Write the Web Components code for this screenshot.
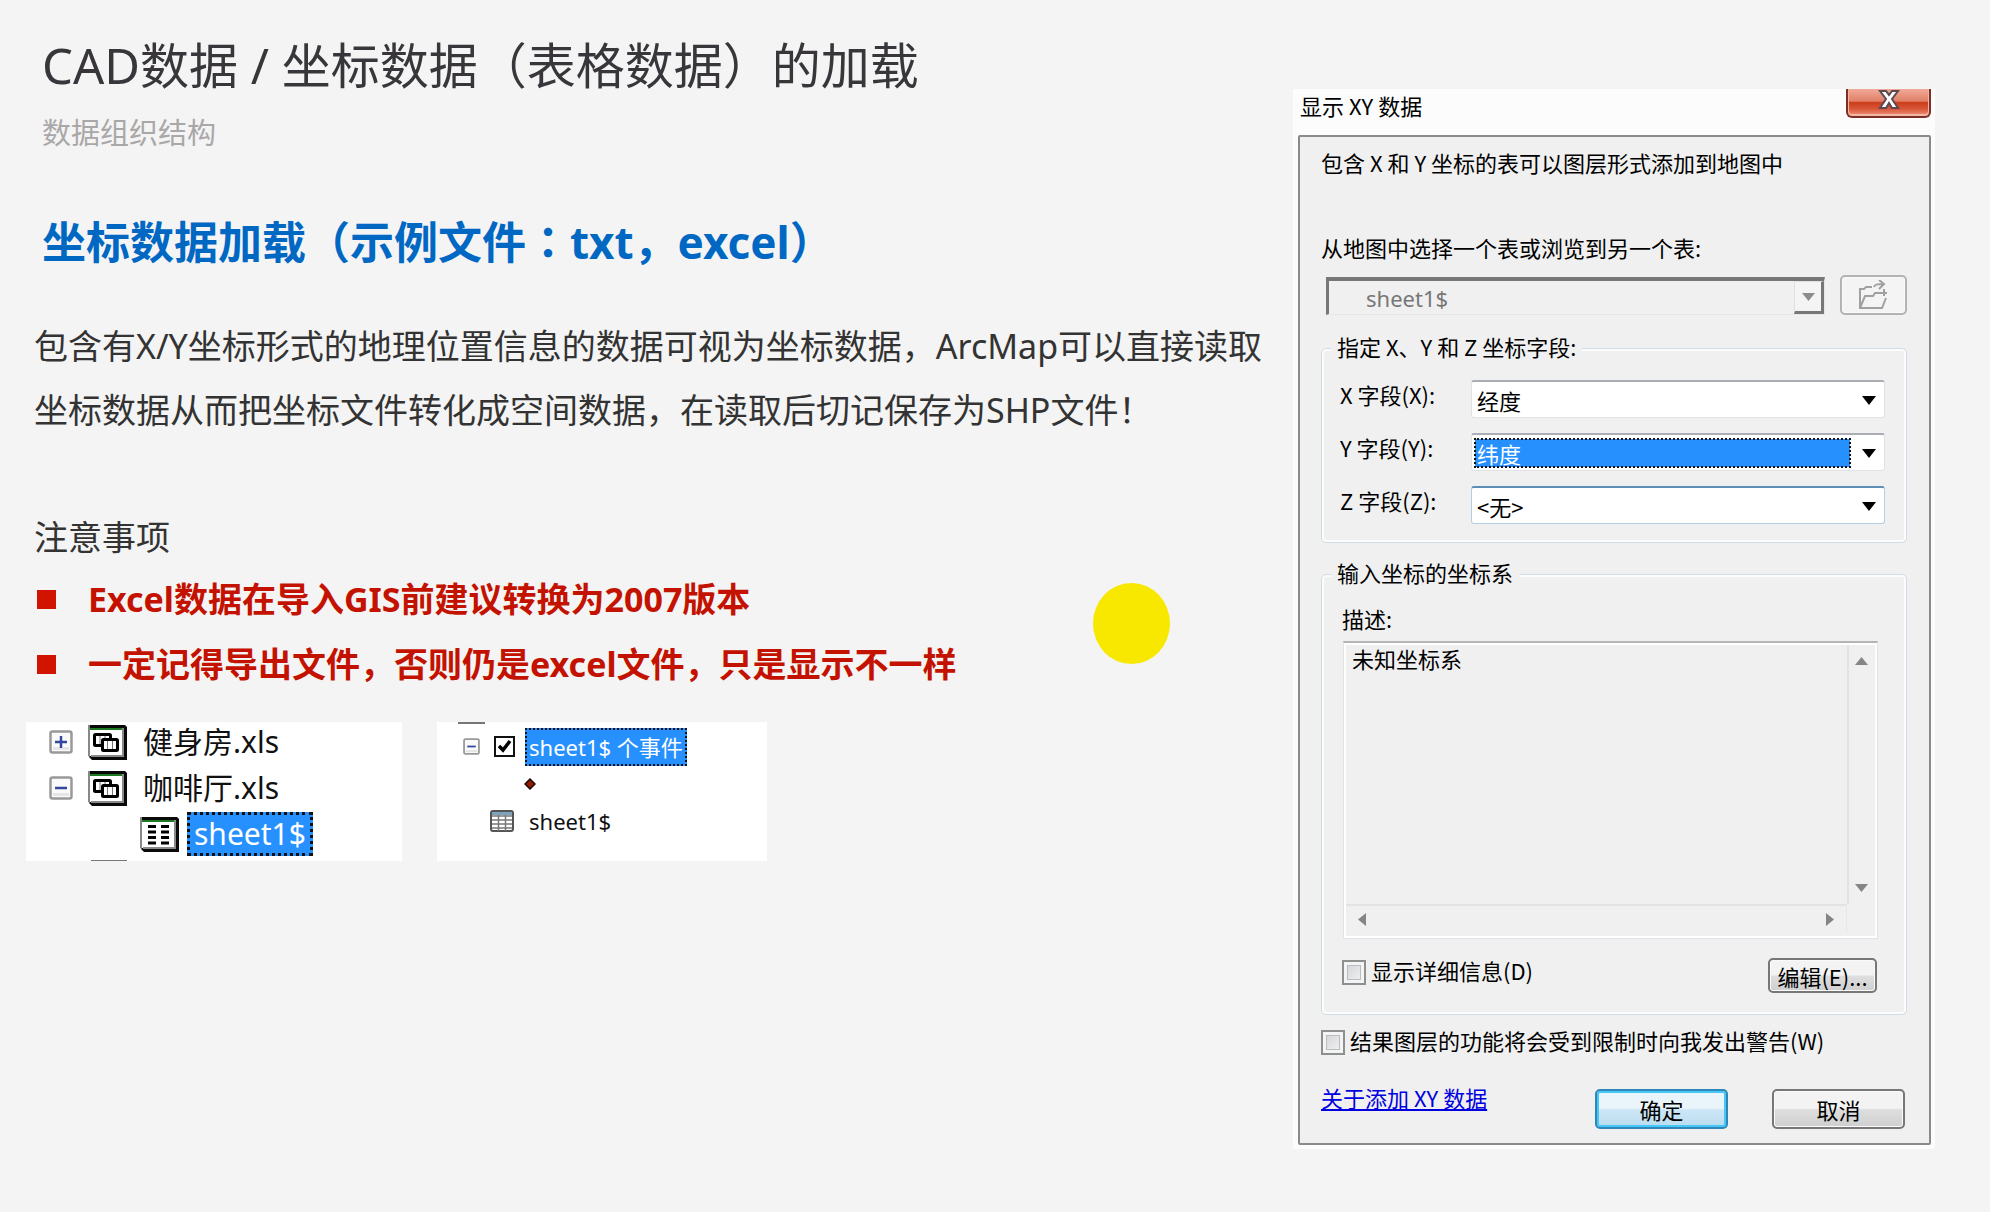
<!DOCTYPE html>
<html lang="zh-CN">
<head>
<meta charset="utf-8">
<title>CAD数据 / 坐标数据的加载</title>
<style>
  html { background: #f4f4f4; }
  body { margin: 0; font-family: "Noto Sans", "Noto Sans CJK SC", sans-serif; color: #333; }
</style>
</head>
<body>
<slide-page>
  <slide-lesson slot="main"></slide-lesson>
  <xy-dialog slot="side"></xy-dialog>
</slide-page>

<script>
function define(name, html, setup) {
  const tpl = document.createElement('template');
  tpl.innerHTML = html;
  customElements.define(name, class extends HTMLElement {
    constructor() {
      super();
      this.attachShadow({ mode: 'open' }).appendChild(tpl.content.cloneNode(true));
    }
    connectedCallback() { if (setup) setup(this, this.shadowRoot); }
  });
}

define('slide-page', `
<style>
  :host { display: grid; grid-template-columns: minmax(0, 1fr) 642px; padding-right: 55px; min-height: 100vh; box-sizing: border-box; position: relative; background: #f4f4f4; }
  .side { padding-top: 89px; }
  .pointer { position: absolute; left: 1093px; top: 583px; width: 77px; height: 81px; border-radius: 50%; background: #f8e800; }
</style>
<main><slot name="main"></slot></main>
<aside class="side"><slot name="side"></slot></aside>
<div class="pointer"></div>`);

define('slide-lesson', `
<style>
  :host { display: block; padding: 33px 13px 0 26px; }
  h1, h2, h3, p, ul { margin: 0; font-weight: 400; }
  header { padding-left: 16px; }
  h1 { font-size: 49px; line-height: 64px; color: #38363a; }
  .sub { font-size: 29px; line-height: 40px; margin-top: 16px; color: #aaa7a8; }
  h2 { font-size: 44px; line-height: 60px; margin-top: 59px; font-weight: 700; color: #0068c3; }
  .body { padding-left: 8px; font-size: 34px; color: #333; }
  .body p { line-height: 64px; margin-top: 42px; }
  h3 { font-size: 34px; line-height: 60px; margin-top: 65px; }
  ul { list-style: none; padding: 0; }
  li { display: flex; align-items: center; gap: 32px; line-height: 65px; padding-left: 3px; font-weight: 700; color: #c41200; }
  li::before { content: ""; width: 19px; height: 19px; background: #d01400; }
  .mid { font-family: "Noto Sans CJK TC", sans-serif; line-height: 1; }
  .cards { display: flex; gap: 35px; margin-top: 25px; }
</style>
<header>
  <h1>CAD数据 / 坐标数据（表格数据）的加载</h1>
  <p class="sub">数据组织结构</p>
  <h2>坐标数据加载（示例文件<span class="mid" lang="zh-Hant">：</span>txt，excel）</h2>
</header>
<div class="body">
  <p>包含有X/Y坐标形式的地理位置信息的数据可视为坐标数据，ArcMap可以直接读取坐标数据从而把坐标文件转化成空间数据，在读取后切记保存为SHP文件！</p>
  <h3>注意事项</h3>
  <ul>
    <li>Excel数据在导入GIS前建议转换为2007版本</li>
    <li>一定记得导出文件，否则仍是excel文件，只是显示不一样</li>
  </ul>
</div>
<div class="cards">
  <catalog-tree></catalog-tree>
  <layer-tree></layer-tree>
</div>`);

define('tree-toggle', `
<style>
  :host { display: block; width: var(--size, 24px); height: var(--size, 24px); }
  button { display: block; width: 100%; height: 100%; padding: 0; border: 0; background: none; }
  svg { display: block; width: 100%; height: 100%; }
  :host([open]) .v { display: none; }
</style>
<button type="button" aria-label="展开或折叠">
  <svg viewBox="0 0 24 24">
    <rect x="1.5" y="1.5" width="21" height="21" rx="2" fill="#fafafa" stroke="#999" stroke-width="2.500"/>
    <path d="M4 17h16v3H4z" fill="#e6e6e6"/>
    <path d="M6 12h12" stroke="#34479c" stroke-width="2.500"/>
    <path class="v" d="M12 6v12" stroke="#34479c" stroke-width="2.500"/>
  </svg>
</button>`);

define('book-icon', `
<style>:host { display: block; width: 39px; height: 36px; } svg { display: block; } :host([sheet]) .book, :host(:not([sheet])) .sheet { display: none; }</style>
<svg width="39" height="36" viewBox="0 0 39 36">
  <path d="M1 1h36l2 2v33H4l-3-3z" fill="#0a0a0a"/>
  <path d="M0 1h2v32l-2-1z" fill="#888"/>
  <path d="M2 5h32v27H2z" fill="#fff"/>
  <path d="M2 4h32v2H2z" fill="#1d7a22"/>
  <path d="M34 4h2v29H3v-2h31z" fill="#8a8a8a"/>
  <g class="book">
    <rect x="6.500" y="10.500" width="16" height="11" rx="1" fill="#fff" stroke="#000" stroke-width="3"/>
    <path d="M12 12v8M17 12v4" stroke="#777"/>
    <rect x="14.500" y="15.500" width="15" height="11" rx="1" fill="#fff" stroke="#000" stroke-width="3"/>
    <path d="M19.500 17v8M24.500 17v8" stroke="#777"/>
  </g>
  <g class="sheet" stroke="#000" stroke-width="3">
    <path d="M8 10.500h8M8 16h8M8 21.500h8M8 27h8M21 10.500h8M21 16h8M21 21.500h8M21 27h8"/>
  </g>
</svg>`);

define('catalog-tree', `
<style>
  :host { display: flex; flex-direction: column; gap: 6px; width: 376px; height: 139px; overflow: hidden; background: #fff; font-size: 30px; line-height: 40px; color: #111; }
  .row { display: flex; align-items: center; height: 40px; padding-left: 23px; }
  book-icon { margin: 0 16px 0 15px; }
  .child { padding-left: 98px; }
  .child book-icon { margin: 0 8px 0 16px; }
  .sel { background: #2690ff; color: #fff; outline: 3px dotted #111; outline-offset: -3px; padding: 2px 7px; }
  .next { width: 36px; height: 2px; margin-left: 65px; background: #777; }
</style>
<div class="row"><tree-toggle></tree-toggle><book-icon></book-icon><span>健身房.xls</span></div>
<div class="row"><tree-toggle open></tree-toggle><book-icon></book-icon><span>咖啡厅.xls</span></div>
<div class="row child"><book-icon sheet></book-icon><span class="sel">sheet1$</span></div>
<div class="next"></div>`);

define('layer-tree', `
<style>
  :host { display: block; width: 330px; height: 139px; background: #fff; font-size: 22px; line-height: 34px; color: #111; }
  .prev { width: 27px; height: 2px; margin: 0 0 4px 21px; background: #777; }
  .row { display: flex; align-items: center; height: 37px; padding-left: 26px; }
  tree-toggle { --size: 17px; }
  input { appearance: none; width: 21px; height: 21px; margin: 0 10px 0 14px; border: 2px solid #111; background: #fff url("data:image/svg+xml,%3Csvg xmlns='http://www.w3.org/2000/svg' viewBox='0 0 17 17'%3E%3Cpath d='M3 8l4 4 7-9' fill='none' stroke='%23000' stroke-width='3.500'/%3E%3C/svg%3E"); }
  .sel { background: #2690ff; color: #fff; outline: 2px dotted #111; outline-offset: -2px; padding: 2px 4px; }
  .symbol { padding-left: 87px; }
  .table { padding-left: 53px; gap: 15px; }
  svg { display: block; }
</style>
<div class="prev"></div>
<div class="row"><tree-toggle open></tree-toggle><input id="on" type="checkbox" checked><label for="on" class="sel">sheet1$ 个事件</label></div>
<div class="row symbol"><svg width="12" height="12" viewBox="0 0 12 12"><path d="M6 1l5 5-5 5-5-5z" fill="#8c1c04" stroke="#200800" stroke-width="1.500"/></svg></div>
<div class="row table">
  <svg width="24" height="22" viewBox="0 0 24 22"><rect x="1" y="1" width="22" height="20" rx="2" fill="#fff" stroke="#555" stroke-width="2"/><path d="M2 2h20v3H2z" fill="#7da3bd"/><path d="M2 6h20M2 10h20M2 14h20M2 18h20M8.500 5v16M15.500 5v16" stroke="#777" stroke-width="1.500"/></svg>
  <span>sheet1$</span>
</div>`);

define('win-button', `
<style>
  :host { display: block; }
  button { width: 100%; height: 100%; padding: 0; font: inherit; color: #000; border: 2px solid #777; border-radius: 5px; background: linear-gradient(#f3f3f3 0 48%, #dedede 52%, #cfcfcf); box-shadow: inset 0 0 0 1px #fafafa; }
  :host([primary]) button { border-color: #2f86b8; background: linear-gradient(#eaf5fb 0 48%, #cde6f5 52%, #b9dcf0); box-shadow: inset 0 0 0 2px #45c8f5; }
  :host([disabled]) button { border-color: #b3b3b3; background: #f4f4f4; }
  ::slotted(svg) { display: block; margin: auto; }
</style>
<button type="button"><slot></slot></button>`, (el, root) => {
  if (el.hasAttribute('disabled')) root.querySelector('button').disabled = true;
  if (el.title) root.querySelector('button').setAttribute('aria-label', el.title);
});

define('group-box', `
<style>
  :host { display: block; }
  fieldset { margin: 0; min-width: 0; padding: 18px 21px 18px 18px; border: 1px solid #d3dce3; border-radius: 5px; box-shadow: inset 0 0 0 2px #fbfcfd; }
  legend { margin-left: -9px; padding: 0 6px 4px; line-height: 24px; background: #f0f0f0; }
</style>
<fieldset><legend></legend><slot></slot></fieldset>`, (el, root) => {
  root.querySelector('legend').textContent = el.getAttribute('legend');
});

define('field-row', `
<style>
  :host { display: flex; align-items: flex-start; }
  label { flex: 0 0 131px; line-height: 28px; }
  .box { flex: 1; position: relative; display: flex; height: 38px; box-sizing: border-box; border: 1px solid #dfe2e6; border-top: 2px solid #aaaeb4; border-radius: 3px; background: #fff; padding: 4px 34px 3px 3px; }
  select { appearance: none; flex: 1; min-width: 0; font: inherit; color: #000; border: 0; background: none; padding: 0 0 0 2px; margin: 0; line-height: 28px; border-radius: 0; }
  svg { position: absolute; right: 8px; top: 14px; }
  :host([selected]) select { background: #2690ff; color: #fff; outline: 2px dotted #111; outline-offset: -1px; }
  :host([hot]) .box { border-color: #b5cfe7; border-top-color: #5f8fb8; }
</style>
<label for="f"></label>
<div class="box"><select id="f"><option></option></select><svg width="14" height="9" viewBox="0 0 14 9"><path d="M0 0h14L7 9z" fill="#000"/></svg></div>`, (el, root) => {
  root.querySelector('label').textContent = el.getAttribute('label');
  root.querySelector('option').textContent = el.getAttribute('value');
});

define('check-row', `
<style>
  :host { display: flex; align-items: center; line-height: 24px; }
  label { padding-bottom: 4px; }
  input { appearance: none; width: 24px; height: 25px; margin: 0 5px 0 0; border: 2px solid #8e8f8f; background: linear-gradient(135deg, #cfd0d4, #f6f6f6); box-shadow: inset 0 0 0 3px #f4f4f4, inset 0 0 0 4px #b9bdc2; }
</style>
<input type="checkbox" id="c"><label for="c"><slot></slot></label>`);

define('scroll-pane', `
<style>
  :host { display: grid; grid-template-columns: minmax(0, 1fr) 27px; grid-template-rows: 1fr 29px; height: 298px; box-sizing: border-box; border: 1px solid #e2e3ea; border-top: 2px solid #b5b5b5; box-shadow: inset 0 0 0 2px #fff; padding: 2px 3px 5px 2px; }
  textarea { resize: none; border: 0; outline: 0; margin: 0; padding: 1px 6px; font: inherit; line-height: 24px; color: #000; background: #f0f0f0; overflow: hidden; }
  .bar { display: flex; justify-content: space-between; background: #f0f0f0; }
  .v { flex-direction: column; border-left: 2px solid #e3e3e3; }
  .h { border-top: 2px solid #e3e3e3; border-right: 1px solid #e8e8e8; }
  button { flex: 0 0 32px; display: grid; place-items: center; border: 0; padding: 0; background: none; }
</style>
<textarea readonly aria-label="描述"></textarea>
<div class="bar v">
  <button type="button" aria-label="上"><svg width="13" height="8"><path d="M6.500 0L13 8H0z" fill="#858585"/></svg></button>
  <button type="button" aria-label="下"><svg width="13" height="8"><path d="M6.500 8L13 0H0z" fill="#858585"/></svg></button>
</div>
<div class="bar h">
  <button type="button" aria-label="左"><svg width="8" height="13"><path d="M0 6.500L8 0v13z" fill="#858585"/></svg></button>
  <button type="button" aria-label="右"><svg width="8" height="13"><path d="M8 6.500L0 0v13z" fill="#858585"/></svg></button>
</div>`, (el, root) => {
  root.querySelector('textarea').value = el.getAttribute('value');
});

define('xy-dialog', `
<style>
  :host { display: block; background: #fcfcfc; padding: 0 4px 4px 5px; font-family: "Noto Sans CJK SC", sans-serif; font-size: 22px; line-height: 24px; color: #000; }
  .title { display: flex; justify-content: space-between; align-items: flex-start; height: 46px; padding-left: 2px; }
  h4 { margin: 0; font-weight: 400; line-height: 32px; }
  .close { width: 85px; height: 29px; padding: 0; border: 2px solid #7c2f25; border-top: 0; border-radius: 0 0 6px 6px; background: linear-gradient(#f0aa98, #e07f68 45%, #cc3d1c 50%, #d9583a 75%, #f09a7c); box-shadow: inset 0 -1px 0 1px #f3b5a4; }
  .close svg { display: block; margin: 0 auto 6px; }
  .frame { border: 2px solid #8a8a8a; border-radius: 2px; background: #f0f0f0; padding: 13px 22px 14px 21px; }
  p { margin: 0; }
  .table { margin-top: 61px; display: block; }
  .source { display: flex; gap: 15px; margin: 16px 0 19px 5px; height: 40px; }
  .combo { flex: 1; position: relative; display: flex; margin: 2px 0 0; height: 38px; box-sizing: border-box; border: 1px solid #e6e6e6; border-top: 4px solid #777; border-left: 3px solid #777; }
  .combo select { appearance: none; flex: 1; font: inherit; font-family: "Noto Sans", sans-serif; color: #777; opacity: 1; border: 0; background: none; padding: 0 0 0 37px; line-height: 28px; }
  .drop { width: 30px; box-sizing: border-box; border: 1px solid #e0e0e0; border-right: 3px solid #777; border-bottom: 3px solid #777; background: #f4f4f4; display: grid; place-items: center; }
  .source win-button { width: 67px; }
  .fields { display: flex; flex-direction: column; gap: 15px; }
  .second { margin-top: 17px; }
  scroll-pane { margin: 11px 7px 19px 3px; }
  .detail { display: flex; justify-content: space-between; align-items: flex-start; margin: 0 8px 3px 2px; }
  .detail win-button { width: 109px; height: 35px; }
  .desc { padding-left: 2px; }
  .warn { margin-top: 13px; }
  footer { display: flex; align-items: flex-start; margin-top: 33px; }
  a { color: #0000e0; line-height: 16px; margin-right: auto; }
  footer win-button { width: 133px; height: 40px; }
  footer win-button + win-button { margin: 0 2px 0 44px; }
</style>
<div class="title">
  <h4>显示 XY 数据</h4>
  <button class="close" type="button" aria-label="关闭"><svg width="22" height="20" viewBox="0 0 22 20"><path d="M2 1h6l3 4 3-4h6l-6 8 6 9h-6l-3-5-3 5H2l6-9z" fill="#fff" stroke="#5c4a50" stroke-width="2"/></svg></button>
</div>
<div class="frame">
  <p>包含 X 和 Y 坐标的表可以图层形式添加到地图中</p>
  <label class="table" for="table">从地图中选择一个表或浏览到另一个表:</label>
  <div class="source">
    <div class="combo"><select id="table" disabled><option>sheet1$</option></select><div class="drop"><svg width="13" height="8"><path d="M0 0h13L6.500 8z" fill="#8c8c8c"/></svg></div></div>
    <win-button disabled title="浏览"><svg width="32" height="30" viewBox="0 0 32 30" fill="none" stroke="#a0a0a0" stroke-width="2"><path d="M14 7H8L6 9H2v19h22l4-10M2 28l5-12h8l2-3h12M26 9v7M16 7c1-3 4-3 9-3M21 0l5 4-5 5"/></svg></win-button>
  </div>
  <group-box legend="指定 X、Y 和 Z 坐标字段:">
    <div class="fields">
      <field-row label="X 字段(X):" value="经度"></field-row>
      <field-row label="Y 字段(Y):" value="纬度" selected></field-row>
      <field-row label="Z 字段(Z):" value="&lt;无&gt;" hot></field-row>
    </div>
  </group-box>
  <group-box class="second" legend="输入坐标的坐标系">
    <p class="desc">描述:</p>
    <scroll-pane value="未知坐标系"></scroll-pane>
    <div class="detail"><check-row>显示详细信息(D)</check-row><win-button>编辑(E)...</win-button></div>
  </group-box>
  <check-row class="warn">结果图层的功能将会受到限制时向我发出警告(W)</check-row>
  <footer><a href="#">关于添加 XY 数据</a><win-button primary>确定</win-button><win-button>取消</win-button></footer>
</div>`);
</script>
</body>
</html>
